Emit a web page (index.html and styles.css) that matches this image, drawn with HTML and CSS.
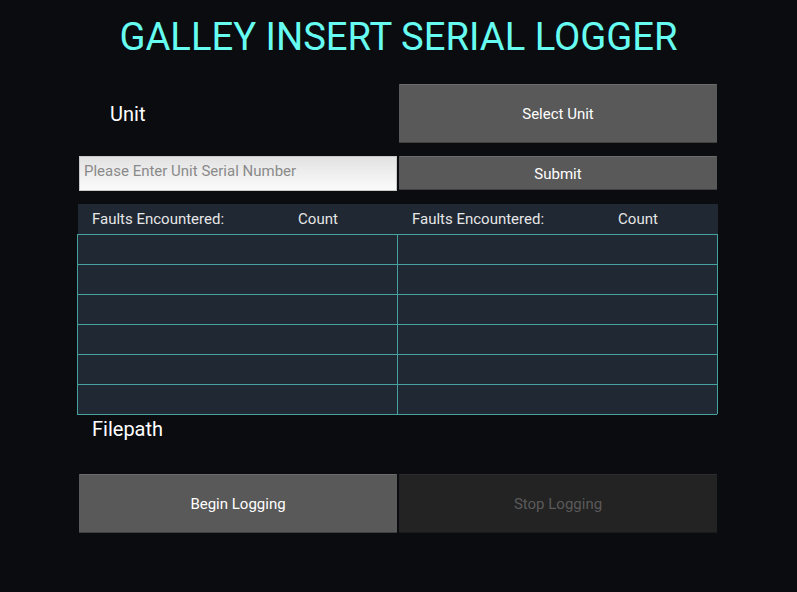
FILE: index.html
```html
<!DOCTYPE html>
<html>
<head>
<meta charset="utf-8">
<link rel="stylesheet" href="styles.css">
</head>
<body>
<h1 class="title">GALLEY INSERT SERIAL LOGGER</h1>
<div class="wrap">
  <div class="row row-unit">
    <div class="label unit-label">Unit</div>
    <button class="btn btn-select">Select Unit</button>
  </div>
  <div class="row row-serial">
    <input class="serial" type="text" placeholder="Please Enter Unit Serial Number">
    <button class="btn btn-submit">Submit</button>
  </div>
  <div class="faults">
    <div class="faults-head">
      <span>Faults Encountered:</span><span>Count</span><span>Faults Encountered:</span><span>Count</span>
    </div>
    <div class="faults-grid">
      <div class="cell"></div><div class="cell"></div>
      <div class="cell"></div><div class="cell"></div>
      <div class="cell"></div><div class="cell"></div>
      <div class="cell"></div><div class="cell"></div>
      <div class="cell"></div><div class="cell"></div>
      <div class="cell"></div><div class="cell"></div>
    </div>
  </div>
  <div class="label filepath">Filepath</div>
  <div class="row row-log">
    <button class="btn btn-begin">Begin Logging</button>
    <button class="btn btn-stop" disabled>Stop Logging</button>
  </div>
</div>
</body>
</html>
```
FILE: styles.css
```css
* { box-sizing: border-box; }
html, body { margin: 0; padding: 0; }
body {
  background: #0b0c10;
  font-family: Roboto, "Noto Sans", sans-serif;
  width: 797px;
  height: 592px;
  overflow: hidden;
}
.title {
  margin: 0;
  padding-top: 15px;
  height: 84px;
  text-align: center;
  font-size: 38.2px;
  font-weight: 400;
  color: #66fcf1;
  line-height: 44px;
}
.wrap {
  margin-left: 78px;
  width: 640px;
}
.row {
  display: grid;
  grid-template-columns: 320px 320px;
}
.row-unit { height: 60px; }
.unit-label {
  padding-left: 32px;
  align-self: center;
  font-size: 20px;
  color: #ffffff;
  margin-top: 0;
}
.btn {
  font-family: Roboto, "Noto Sans", sans-serif;
  font-size: 15px;
  color: #ffffff;
  background: #595959;
  border: none;
  border-top: 1px solid #6b6b6b;
  border-bottom: 1px solid #404040;
  border-radius: 1px;
  margin: 0 1px;
  padding: 0;
}
.btn-select { height: 59px; }
.row-serial { margin-top: 12px; height: 36px; }
.serial {
  margin: 0 1px;
  height: 35px;
  border: 1px solid #c8c8c8;
  background: linear-gradient(#e2e2e2, #fbfbfb);
  font-family: Roboto, "Noto Sans", sans-serif;
  font-size: 15px;
  padding: 4px 4px 10px 4px;
  color: #222;
  outline: none;
}
.serial::placeholder { color: #8a8a8a; }
.btn-submit { height: 34px; padding-top: 2px; }
.faults { margin-top: 12px; background: #1f2833; }
.faults-head {
  display: grid;
  grid-template-columns: repeat(4, 160px);
  height: 30px;
  align-items: center;
  color: #e6e6e6;
  font-size: 15px;
  text-align: center;
  padding-bottom: 1px;
}
.faults-grid {
  display: grid;
  grid-template-columns: 320px 320px;
  grid-auto-rows: 30px;
  border-left: 1px solid #45a29e;
  border-bottom: 1px solid #45a29e;
  margin-left: -1px;
  width: 640px;
}
.cell {
  border-top: 1px solid #45a29e;
  border-right: 1px solid #45a29e;
}
.filepath {
  height: 59px;
  padding-left: 14px;
  padding-top: 2px;
  font-size: 20px;
  color: #ffffff;
}
.row-log { height: 59px; }
.btn-begin { height: 59px; padding-top: 1px; }
.btn-stop {
  height: 59px;
  padding-top: 1px;
  background: #232323;
  border-top-color: #2c2c2c;
  border-bottom-color: #1a1a1a;
  color: #5a5a5a;
}
```
